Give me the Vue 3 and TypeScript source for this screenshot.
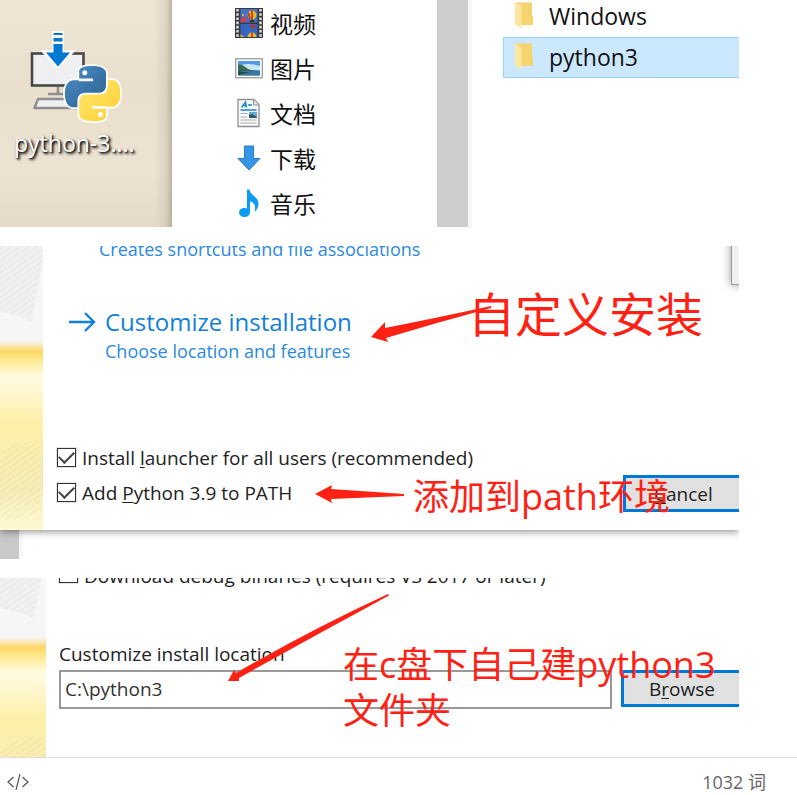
<script setup lang="ts">
import { ref } from 'vue'

type IconName = 'video' | 'picture' | 'document' | 'download' | 'music'

interface Place {
  icon: IconName
  label: string
}

const places: Place[] = [
  { icon: 'video', label: '视频' },
  { icon: 'picture', label: '图片' },
  { icon: 'document', label: '文档' },
  { icon: 'download', label: '下载' },
  { icon: 'music', label: '音乐' },
]

const folders = ['Windows', 'python3']
const selectedFolder = ref('python3')

const installLauncher = ref(true)
const addToPath = ref(true)
const debugBinaries = ref(false)
const location = ref('C:\\python3')
const wordCount = 1032

const snake =
  'M14.25.18l.9.2.73.26.59.3.45.32.34.34.25.34.16.33.1.3.04.26.02.2-.01.13V8.5l-.05.63-.13.55-.21.46-.26.38-.3.31-.33.25-.35.19-.35.14-.33.1-.3.07-.26.04-.21.02H8.77l-.69.05-.59.14-.5.22-.41.27-.33.32-.27.35-.2.36-.15.37-.1.35-.07.32-.04.27-.02.21v3.06H3.17l-.21-.03-.28-.07-.32-.12-.35-.18-.36-.26-.36-.36-.35-.46-.32-.59-.28-.73-.21-.88-.14-1.05-.05-1.23.06-1.22.16-1.04.24-.87.32-.71.36-.57.4-.44.42-.33.42-.24.4-.16.36-.1.32-.05.24-.01h.16l.06.01h8.16v-.83H6.18l-.01-2.75-.02-.37.05-.34.11-.31.17-.28.25-.26.31-.23.38-.2.44-.18.51-.15.58-.12.64-.1.71-.06.77-.04.84-.02 1.27.05z'
</script>

<template>
  <div class="editor">
    <main class="page">
      <section class="shot explorer">
        <div class="desktop">
          <svg class="installer" viewBox="28 30 96 96" aria-hidden="true">
            <defs>
              <linearGradient id="blue" x1="0" y1="0" x2="1" y2="1">
                <stop offset="0" stop-color="#4b8fc8" />
                <stop offset="1" stop-color="#2b5f8e" />
              </linearGradient>
              <linearGradient id="yellow" x1="1" y1="1" x2="0" y2="0">
                <stop offset="0" stop-color="#ffe873" />
                <stop offset="1" stop-color="#ffce2e" />
              </linearGradient>
            </defs>
            <rect x="32" y="53.500" width="51.500" height="32" fill="#efeff2" stroke="#484848" stroke-width="2.600" />
            <path d="M58 87v6M48 94h22" stroke="#8e8e90" stroke-width="2.600" fill="none" />
            <path d="M38 99h42l4 9H34.500z" fill="#efeff2" stroke="#8e8e90" stroke-width="2.400" stroke-linejoin="round" />
            <path d="M52 31h12v19h12L58 70 40 50h12z" fill="#fdfaf4" />
            <path d="M53.500 33h9v2h-9zM53.500 38h9v3.500h-9zM53.500 44h9v8.500h7.500L58 66.500 46 52.500h7.500z" fill="#0078d4" />
            <g transform="translate(65 66) scale(2.3)">
              <path :d="snake" fill="#fff" stroke="#fff" stroke-width="1.500" />
              <path :d="snake" fill="#fff" stroke="#fff" stroke-width="1.500" transform="rotate(180 12 12)" />
              <path :d="snake" fill="url(#blue)" />
              <path :d="snake" fill="url(#yellow)" transform="rotate(180 12 12)" />
              <path d="M6 6.200h6.200M18 17.800h-6.200" stroke="#fff" stroke-width=".8" />
              <circle cx="8.600" cy="2.900" r="1.100" fill="#fff" />
              <circle cx="15.400" cy="21.100" r="1.100" fill="#fff" />
            </g>
          </svg>
          <span class="desktop-label">python-3....</span>
        </div>

        <ul class="places">
          <li v-for="place in places" :key="place.icon" class="place">
            <svg class="place-icon" viewBox="0 0 28 30" aria-hidden="true">
              <g v-if="place.icon === 'video'">
                <rect x="0" y="0" width="28" height="30" fill="#3b3b3b" />
                <path d="M2.500 1v28M25.500 1v28" stroke="#d8d8d8" stroke-width="2.600" stroke-dasharray="2.600 1.600" />
                <rect x="5.500" y="1" width="17" height="13.500" fill="#3f73d1" />
                <rect x="5.500" y="16" width="17" height="13" fill="#3565c2" />
                <ellipse cx="17" cy="7" rx="4.500" ry="4.500" fill="#e8b820" />
                <path d="M17 2.500v9M13.500 5l1.500 6" stroke="#bb2c24" stroke-width="1.600" />
                <path d="M15 12h4v2h-4z" fill="#27391d" />
                <path d="M5.500 11l4-3 3 5-7 1.500z" fill="#d33c51" />
                <circle cx="8" cy="7" r="1" fill="#f2c822" />
                <path d="M14 17h7l-3 4z" fill="#c92d26" />
                <path d="M12.500 29a4.500 4.500 0 0 1 9 0z" fill="#e5bd27" />
                <path d="M17 24.500V29" stroke="#b82a23" stroke-width="1.500" />
                <path d="M5.500 26l4 3h-4z" fill="#d6b52a" />
              </g>
              <g v-else-if="place.icon === 'picture'">
                <rect x=".7" y="5.700" width="26.600" height="19" fill="#fff" stroke="#a2a2a2" stroke-width="1.400" />
                <rect x="3" y="8" width="22" height="14.500" fill="#5596e6" />
                <path d="M3 13q10-4 22 0v4H3z" fill="#c7e7f5" />
                <path d="M3 11.500q5 0 8 3t11 3l-4 1H3z" fill="#356b51" />
                <path d="M3 18h22v4.500H3z" fill="#3a78a4" />
                <path d="M3 18q8 2 15 .5L3 22z" fill="#234e50" />
              </g>
              <g v-else-if="place.icon === 'document'">
                <path d="M3 1.500h16l5 5v22H3z" fill="#fafafa" stroke="#909090" stroke-width="1.300" />
                <path d="M18.500 1.500v5.500H24" fill="#e5e5e5" stroke="#909090" />
                <path d="M6.500 9.500l4-5.500 1 5.500M8.500 7.500h3M13 7h4M5.500 12h16" stroke="#1685cf" stroke-width="1.500" fill="none" />
                <path d="M5.500 15.500h7M5.500 19h7M5.500 22h16M5.500 25h16" stroke="#aaa" />
                <rect x="14" y="14" width="8" height="6" fill="#6ba6cf" />
                <path d="M14 17l3-1 5 3v1h-8z" fill="#285c68" />
              </g>
              <path v-else-if="place.icon === 'download'" d="M9.500 3h9v12.500H25L14 27 3 15.500h6.500z" fill="#3795e6" stroke="#257dcc" />
              <g v-else fill="#0c9bf3">
                <ellipse cx="9.500" cy="24.500" rx="5.500" ry="4.500" />
                <path d="M12 1.500h2.500c.5 6 9 7 9 14 0 4-2 7-4 8.500 1.500-5 .5-9.500-4.500-10.500V25h-3z" />
              </g>
            </svg>
            <span>{{ place.label }}</span>
          </li>
        </ul>

        <div class="scroll-track"></div>

        <ul class="folders">
          <li
            v-for="folder in folders"
            :key="folder"
            class="folder"
            :class="{ selected: folder === selectedFolder }"
            @click="selectedFolder = folder"
          >
            <svg class="folder-icon" viewBox="0 0 18 27" aria-hidden="true">
              <path d="M1 .5h16v13.500h1v9H6z" fill="#f5d36f" />
              <path d="M0 .5l6.500 3.500v22.500L0 22.500z" fill="#ffe79d" />
            </svg>
            <span>{{ folder }}</span>
          </li>
        </ul>
      </section>

      <section class="shot setup">
        <div class="dialog">
          <svg class="banner" viewBox="0 0 43 284" preserveAspectRatio="none" aria-hidden="true">
            <defs>
              <linearGradient id="band" x1="0" y1="0" x2="0" y2="284" gradientUnits="userSpaceOnUse">
                <stop offset="0" stop-color="#f7f7f7" />
                <stop offset=".335" stop-color="#f6f6f5" />
                <stop offset=".35" stop-color="#fae9b9" />
                <stop offset=".37" stop-color="#fdd666" />
                <stop offset=".4" stop-color="#fde98e" />
                <stop offset=".46" stop-color="#fffbe3" />
                <stop offset=".62" stop-color="#fdf0a8" />
                <stop offset=".85" stop-color="#f6edb6" />
                <stop offset="1" stop-color="#fff9d2" />
              </linearGradient>
              <pattern id="hatch" width="9" height="5" patternUnits="userSpaceOnUse" patternTransform="rotate(-35)">
                <path d="M0 2h9" stroke="#7d7d70" stroke-opacity=".07" stroke-width="1.500" />
              </pattern>
            </defs>
            <rect width="43" height="284" fill="url(#band)" />
            <path d="M0 0h43v16l-12 60Q16 68 0 66z" fill="#f1f1f1" />
            <path d="M0 0h43v16l-12 60Q16 68 0 66z" fill="url(#hatch)" />
            <path d="M0 205q20-10 43-12v72q-20 8-43 10z" fill="url(#hatch)" />
          </svg>
          <div class="setup-body">
            <p class="hint clipped">Creates shortcuts and file associations</p>
            <a class="choice" href="#">
              <svg class="choice-arrow" viewBox="0 0 28 22" aria-hidden="true">
                <path d="M1 11h24M17 2l9 9-9 9" fill="none" stroke="#1280d8" stroke-width="2.400" />
              </svg>
              <span class="choice-title">Customize installation</span>
              <span class="hint choice-hint">Choose location and features</span>
            </a>
            <div class="options-row">
              <div class="options">
                <label class="check">
                  <input v-model="installLauncher" type="checkbox" />
                  <span>Install <u>l</u>auncher for all users (recommended)</span>
                </label>
                <label class="check">
                  <input v-model="addToPath" type="checkbox" />
                  <span>Add <u>P</u>ython 3.9 to PATH</span>
                </label>
              </div>
              <button type="button" class="push"><u>C</u>ancel</button>
            </div>
          </div>
          <div class="corner"></div>
        </div>
        <div class="behind"><div class="behind-track"></div></div>

        <svg class="pointer pointer-custom" viewBox="0 0 122 38" aria-hidden="true">
          <path d="M0 31L14 16l0 6Q65 12 120 0v2Q68 16 15 32l2 4z" fill="#ff2114" />
        </svg>
        <svg class="pointer pointer-path" viewBox="0 0 90 20" aria-hidden="true">
          <path d="M0 10L17 1l-1 4 73 5v2l-73 3 1 4z" fill="#ff2114" />
        </svg>
        <p class="note note-custom">自定义安装</p>
        <p class="note note-path">添加到path环境</p>
      </section>

      <section class="shot advanced">
        <svg class="banner banner-wide" viewBox="0 36 43 179" preserveAspectRatio="none" aria-hidden="true">
          <rect width="43" height="284" fill="url(#band)" />
          <path d="M0 0h43v16l-12 60Q16 68 0 66z" fill="#f1f1f1" />
          <path d="M0 0h43v16l-12 60Q16 68 0 66z" fill="url(#hatch)" />
          <path d="M0 205q20-10 43-12v72q-20 8-43 10z" fill="url(#hatch)" />
        </svg>
        <div class="advanced-body">
          <label class="check debug">
            <input v-model="debugBinaries" type="checkbox" />
            <span>Download debu<u>g</u> binaries (requires VS 2017 or later)</span>
          </label>
          <label class="field-label" for="install-location">Customize install location</label>
          <div class="field-row">
            <input id="install-location" v-model="location" class="field" type="text" />
            <button type="button" class="push browse">B<u>r</u>owse</button>
          </div>
        </div>
        <svg class="pointer pointer-field" viewBox="0 0 162 90" aria-hidden="true">
          <path d="M0 87L6 76l2 3Q82 36 160 0l1 1.500Q86 42 11 84l0 3z" fill="#ff2114" />
        </svg>
        <p class="note note-field">在c盘下自己建python3<br />文件夹</p>
      </section>
    </main>

    <footer class="status">
      <button type="button" class="source" aria-label="Source">
        <svg viewBox="0 0 22 16" aria-hidden="true">
          <path d="M6.500 3L1 8l5.500 5M15.500 3L21 8l-5.500 5M13 0L9 16" fill="none" stroke="#555" stroke-width="1.200" />
        </svg>
      </button>
      <span class="words">{{ wordCount }} 词</span>
    </footer>
  </div>
</template>

<style>
body {
  margin: 0;
  background: #fff;
}
</style>

<style scoped>
* {
  box-sizing: border-box;
}

.editor {
  display: flex;
  flex-direction: column;
  height: 100vh;
  font-family: 'Open Sans', 'Noto Sans CJK SC', sans-serif;
  color: #222;
}

.page {
  flex: 1;
  min-height: 0;
  overflow: hidden;
  display: flex;
  flex-direction: column;
  gap: 19px;
  padding-right: 58px;
}

.shot {
  position: relative;
  flex: none;
  overflow: hidden;
}

ul,
p {
  margin: 0;
  padding: 0;
  list-style: none;
}

u {
  text-decoration-thickness: 1px;
  text-underline-offset: 2px;
}

/* File explorer over the desktop */
.explorer {
  display: flex;
}

.desktop {
  flex: none;
  width: 172px;
  padding: 30px 14px 0;
  background:
    linear-gradient(to right, transparent 154px, rgba(120, 105, 85, 0.12) 166px, rgba(120, 105, 85, 0.4)),
    linear-gradient(#efe5d4, #eadfcd 40%, #ede3d2 75%, #e5dac8);
}

.installer {
  display: block;
  width: 96px;
  height: 96px;
  margin-left: 14px;
}

.desktop-label {
  display: block;
  font-size: 23px;
  line-height: 34px;
  white-space: nowrap;
  color: #fff;
  text-shadow: 1px 1px 2px #000, 2px 2px 3px #222;
}

.places {
  flex: none;
  width: 265px;
  padding: 0 0 2px 63px;
}

.place {
  display: flex;
  align-items: center;
  gap: 7px;
  height: 45px;
  font-size: 23px;
  color: #111;
}

.place-icon {
  width: 28px;
  height: 30px;
}

.scroll-track {
  flex: none;
  width: 31px;
  background: #cdcdcd;
}

.folders {
  flex: 1;
  min-width: 0;
  margin-top: -4px;
  padding-left: 31px;
  border-left: 4px solid #f8f8f8;
}

.folder {
  display: flex;
  align-items: center;
  gap: 16px;
  height: 41px;
  padding: 0 0 2px 11px;
  border: 1px solid transparent;
  border-right: 0;
  font-size: 23px;
  color: #111;
}

.folder.selected {
  background: #cce8ff;
  border-color: #99d1ff;
}

.folder-icon {
  width: 18px;
  height: 27px;
}

/* Installer start page */
.dialog {
  position: relative;
  z-index: 1;
  display: flex;
  background: #fff;
  box-shadow: 0 1px 8px rgba(0, 0, 0, 0.5);
}

.banner {
  flex: none;
  width: 43px;
  height: 284px;
}

.setup-body {
  flex: 1;
  min-width: 0;
  padding-left: 14px;
}

.hint {
  font-size: 18px;
  line-height: 24px;
  color: #2b8ade;
  white-space: nowrap;
}

.clipped {
  margin: -9px 0 0 42px;
}

.choice {
  display: grid;
  grid-template-columns: 28px 1fr;
  column-gap: 9px;
  align-items: center;
  margin: 44px 0 0 11px;
  text-decoration: none;
}

.choice-arrow {
  width: 28px;
  height: 22px;
}

.choice-title {
  font-size: 24px;
  line-height: 34px;
  color: #1280d8;
}

.choice-hint {
  grid-column: 2;
}

.options-row {
  display: flex;
  justify-content: space-between;
  align-items: flex-end;
  margin-top: 77px;
}

.options {
  padding-bottom: 2px;
}

.check {
  display: flex;
  align-items: center;
  gap: 6px;
  height: 35px;
  font-size: 19px;
  white-space: nowrap;
}

.check input {
  appearance: none;
  flex: none;
  display: grid;
  place-items: center;
  width: 19px;
  height: 19px;
  margin: 0;
  border: 1px solid #333;
  outline: 1px solid #9994;
  background: #fff;
}

.check input:checked::after {
  content: '';
  width: 13px;
  height: 7px;
  margin-top: -4px;
  border: solid #444;
  border-width: 0 0 2px 2px;
  transform: rotate(-45deg);
}

.push {
  flex: none;
  width: 116px;
  height: 37px;
  padding: 0 0 0 28px;
  border: 3px solid #0078d7;
  border-right: 0;
  background: #e1e1e1;
  font: inherit;
  font-size: 19px;
  line-height: 24px;
  text-align: left;
  color: #222;
}

.corner {
  position: absolute;
  top: -10px;
  right: -10px;
  width: 18px;
  height: 49px;
  border: 1px solid #999;
  background: #f0f0f0;
  box-shadow: 0 0 10px rgba(0, 0, 0, 0.4);
}

.behind {
  display: flex;
  height: 29px;
}

.behind-track {
  width: 23px;
  border-right: 4px solid #f8f8f8;
  background: #c9c9c9;
}

/* Advanced options page */
.advanced {
  display: flex;
}

.banner-wide {
  width: 46px;
  height: 180px;
}

.advanced-body {
  flex: 1;
  min-width: 0;
  padding-left: 13px;
}

.debug {
  margin-top: -20px;
}

.debug input {
  margin-top: -4px;
}

.field-label {
  display: block;
  margin-top: 48px;
  font-size: 19px;
  line-height: 26px;
}

.field-row {
  display: flex;
  align-items: flex-start;
  gap: 9px;
  margin-top: 3px;
}

.field {
  flex: 1;
  min-width: 0;
  height: 39px;
  padding: 0 4px 2px;
  border: 2px solid #999;
  background: #fff;
  font: inherit;
  font-size: 19px;
  color: #333;
}

.browse {
  width: 118px;
  padding-left: 25px;
}

/* Red remarks drawn over the screens */
.pointer {
  position: absolute;
  z-index: 2;
}

.pointer-custom {
  left: 371px;
  top: 60px;
  width: 122px;
  height: 38px;
}

.pointer-path {
  left: 315px;
  top: 238px;
  width: 90px;
  height: 20px;
}

.pointer-field {
  left: 228px;
  top: 16px;
  width: 162px;
  height: 90px;
}

.note {
  position: absolute;
  z-index: 2;
  color: #ff2114;
  font-size: 36px;
  line-height: 46px;
  white-space: nowrap;
}

.note-custom {
  left: 468px;
  top: 45px;
  font-size: 47px;
}

.note-path {
  left: 413px;
  top: 228px;
}

.note-field {
  left: 343px;
  top: 64px;
}

/* Status bar */
.status {
  flex: none;
  display: flex;
  justify-content: space-between;
  align-items: center;
  height: 38px;
  padding: 10px 31px 0 7px;
  border-top: 1px solid #ddd;
  background: #fff;
}

.source {
  display: block;
  padding: 0;
  border: 0;
  background: none;
}

.source svg {
  display: block;
  width: 22px;
  height: 16px;
}

.words {
  font-size: 18px;
  line-height: 24px;
  color: #666;
}
</style>
